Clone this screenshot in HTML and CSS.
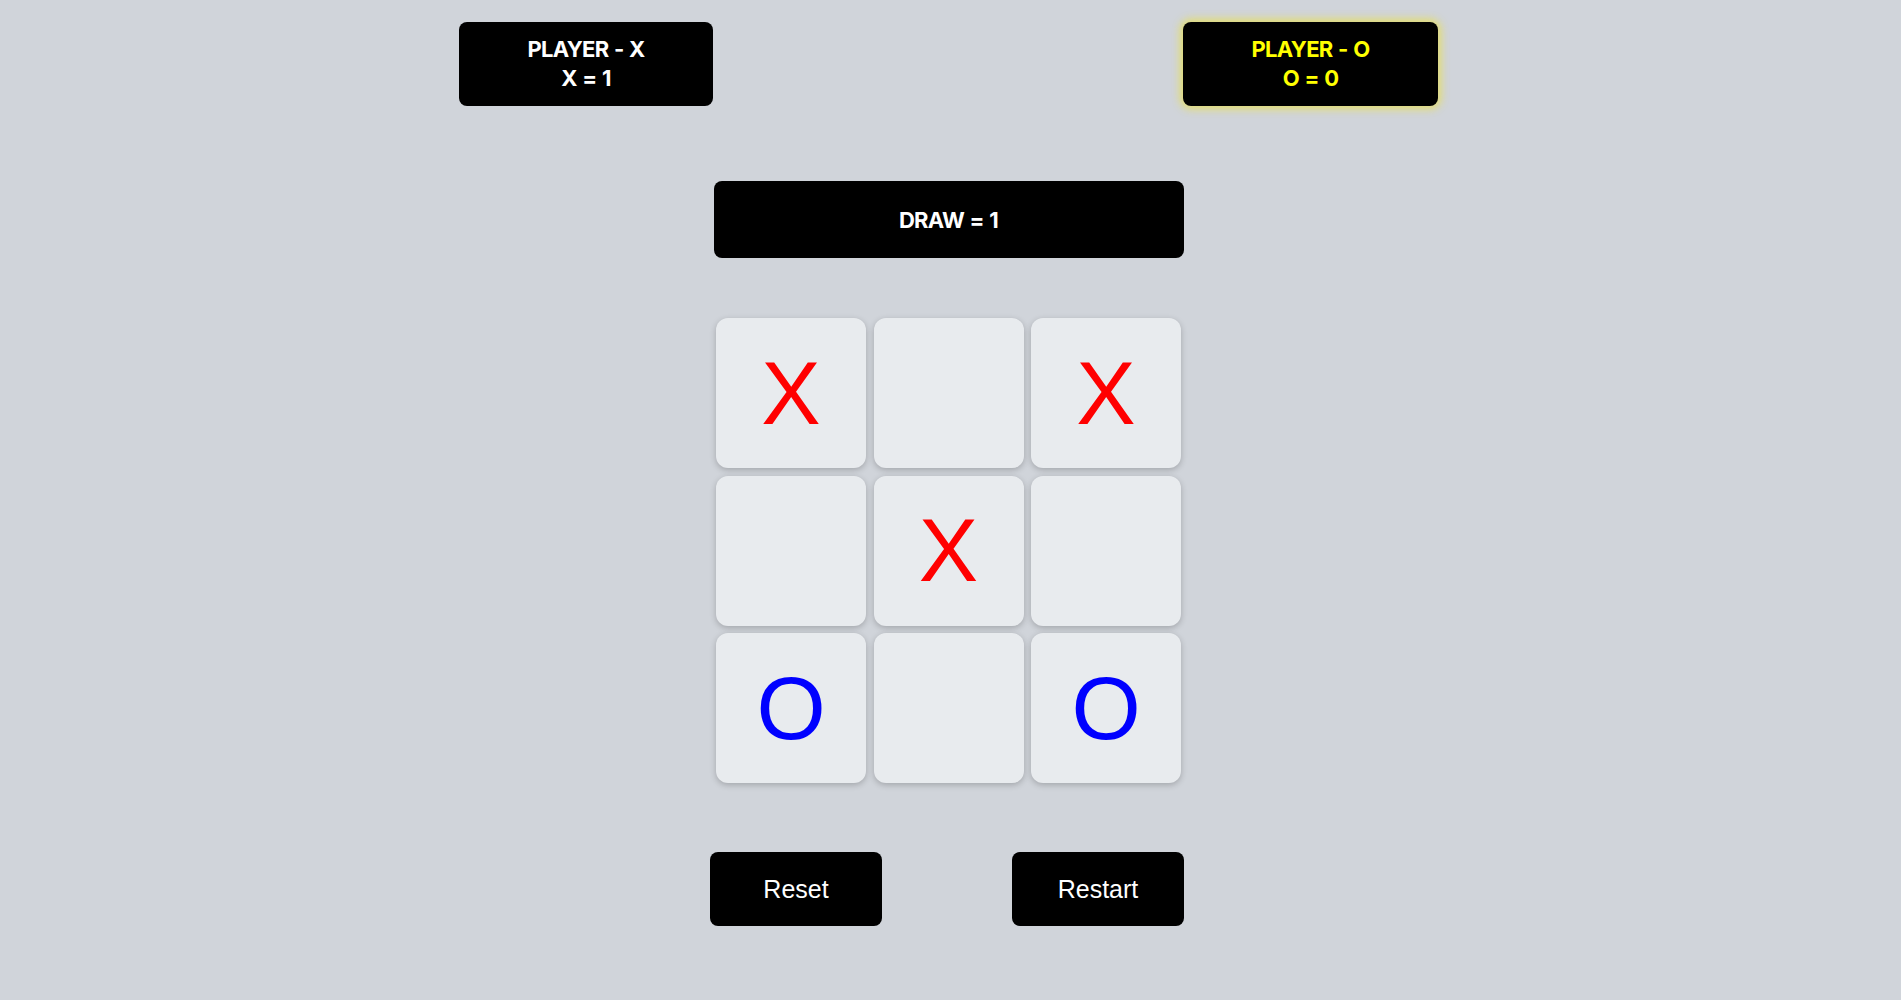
FILE: index.html
```html
<!DOCTYPE html>
<html>
<head>
<meta charset="utf-8">
<link rel="stylesheet" href="styles.css">
</head>
<body>
<div class="app">
  <div class="players">
    <div class="card player">PLAYER - X<br>X = 1</div>
    <div class="card player active">PLAYER - O<br>O = 0</div>
  </div>
  <div class="card draw">DRAW = 1</div>
  <div class="board">
    <div class="cell x">X</div>
    <div class="cell"></div>
    <div class="cell x">X</div>
    <div class="cell"></div>
    <div class="cell x">X</div>
    <div class="cell"></div>
    <div class="cell o">O</div>
    <div class="cell"></div>
    <div class="cell o">O</div>
  </div>
  <div class="actions">
    <button class="btn">Reset</button>
    <button class="btn">Restart</button>
  </div>
</div>
</body>
</html>
```

FILE: styles.css
```css
html, body {
  margin: 0;
  padding: 0;
  background: #d0d4da;
}
body {
  padding-right: 4px;
}
.app {
  width: 979px;
  margin: 0 auto;
  padding-top: 22px;
  display: flex;
  flex-direction: column;
  align-items: center;
}
.players {
  width: 100%;
  display: flex;
  justify-content: space-between;
}
.card {
  background: #000;
  color: #fff;
  border-radius: 8px;
  font-family: "Inter", "Liberation Sans", sans-serif;
  font-weight: 700;
  font-size: 22px;
  text-align: center;
  letter-spacing: -0.7px;
  word-spacing: 1px;
}
.player {
  width: 254px;
  height: 84px;
  box-sizing: border-box;
  padding-top: 13px;
  line-height: 29px;
}
.player.active {
  color: #ffff00;
  width: 255px;
  box-shadow: 0 0 8px 3px rgba(230, 222, 95, 0.9);
}
.draw {
  width: 470px;
  height: 77px;
  margin-top: 75px;
  display: flex;
  align-items: center;
  justify-content: center;
}
.board {
  margin-top: 60px;
  display: grid;
  grid-template-columns: repeat(3, 150px);
  grid-auto-rows: 150px;
  gap: 7.5px;
}
.cell {
  background: #e8ebee;
  border-radius: 12px;
  box-shadow: 0 2px 6px rgba(0, 0, 0, 0.22);
  display: flex;
  align-items: center;
  justify-content: center;
  font-family: "Liberation Sans", Arial, sans-serif;
  font-size: 89px;
  line-height: 1;
}
.cell.x { color: #ff0000; }
.cell.o { color: #0000ff; }
.actions {
  margin-top: 69px;
  margin-right: 3px;
  display: flex;
  gap: 130px;
}
.btn {
  width: 172px;
  height: 74px;
  background: #000;
  color: #fff;
  border: none;
  border-radius: 8px;
  font-family: "Liberation Sans", Arial, sans-serif;
  font-size: 25px;
  padding: 0;
}
```
